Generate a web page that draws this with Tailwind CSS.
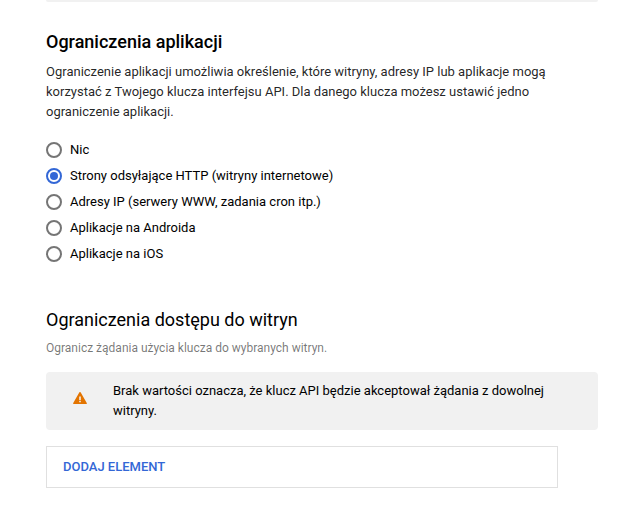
<!DOCTYPE html>
<html lang="pl">
<head>
  <meta charset="UTF-8">
  <meta name="viewport" content="width=device-width, initial-scale=1">
  <title>Ograniczenia klucza interfejsu API</title>
  <script src="https://cdn.jsdelivr.net/npm/@tailwindcss/browser@4"></script>
</head>
<body class="bg-white font-[Roboto,sans-serif] text-[13px] leading-5 text-black">
  <main class="ml-[46px] mr-9">
    <!-- Bottom edge of the previous section -->
    <div class="h-0.5 rounded-b bg-[#f1f1f1]"></div>

    <form>
      <!-- Application restrictions -->
      <fieldset class="pt-7">
        <legend class="contents">
          <span class="block text-lg leading-6 font-medium">Ograniczenia aplikacji</span>
        </legend>
        <p class="mt-2 max-w-[512px] text-black/87">Ograniczenie aplikacji umożliwia określenie, które witryny, adresy IP lub aplikacje mogą korzystać z Twojego klucza interfejsu API. Dla danego klucza możesz ustawić jedno ograniczenie aplikacji.</p>

        <div class="mt-4 flex flex-col items-start gap-1.5 pt-0.5">
          <label class="flex items-center gap-2">
            <input type="radio" name="restriction" class="size-4 appearance-none rounded-full border-2 border-[#757575] checked:border-[#3367d6] checked:bg-[#3367d6] checked:bg-clip-content checked:p-0.5">
            Nic
          </label>
          <label class="flex items-center gap-2">
            <input type="radio" name="restriction" checked class="size-4 appearance-none rounded-full border-2 border-[#757575] checked:border-[#3367d6] checked:bg-[#3367d6] checked:bg-clip-content checked:p-0.5">
            Strony odsyłające HTTP (witryny internetowe)
          </label>
          <label class="flex items-center gap-2">
            <input type="radio" name="restriction" class="size-4 appearance-none rounded-full border-2 border-[#757575] checked:border-[#3367d6] checked:bg-[#3367d6] checked:bg-clip-content checked:p-0.5">
            Adresy IP (serwery WWW, zadania cron itp.)
          </label>
          <label class="flex items-center gap-2">
            <input type="radio" name="restriction" class="size-4 appearance-none rounded-full border-2 border-[#757575] checked:border-[#3367d6] checked:bg-[#3367d6] checked:bg-clip-content checked:p-0.5">
            Aplikacje na Androida
          </label>
          <label class="flex items-center gap-2">
            <input type="radio" name="restriction" class="size-4 appearance-none rounded-full border-2 border-[#757575] checked:border-[#3367d6] checked:bg-[#3367d6] checked:bg-clip-content checked:p-0.5">
            Aplikacje na iOS
          </label>
        </div>
      </fieldset>

      <!-- Website restrictions -->
      <section class="pt-11">
        <h2 class="text-lg leading-6">Ograniczenia dostępu do witryn</h2>
        <p class="mt-1.5 text-xs leading-5 text-black/54">Ogranicz żądania użycia klucza do wybranych witryn.</p>

        <div class="mt-3.5 flex items-start rounded bg-[#f1f1f1] py-[9px] pr-10 pl-[26px]">
          <svg class="mt-2 mr-[25px] size-4 shrink-0" viewBox="0 0 16 16" aria-hidden="true">
            <path fill="#e37400" fill-rule="evenodd" d="M7.4 3.3Q8 2.5 8.6 3.3L14.9 14.2Q15.1 15 14.3 15H1.7Q.9 15 1.1 14.2ZM7.2 7.5V11h1.6V7.5zm0 4.3v1.5h1.6v-1.5z" />
          </svg>
          <p>Brak wartości oznacza, że klucz API będzie akceptował żądania z dowolnej witryny.</p>
        </div>

        <div class="mt-4 mr-10 border border-[#e0e0e0]">
          <button type="button" class="px-4 py-2.5 font-medium text-[#3367d6] uppercase">Dodaj element</button>
        </div>
      </section>
    </form>
  </main>
</body>
</html>
